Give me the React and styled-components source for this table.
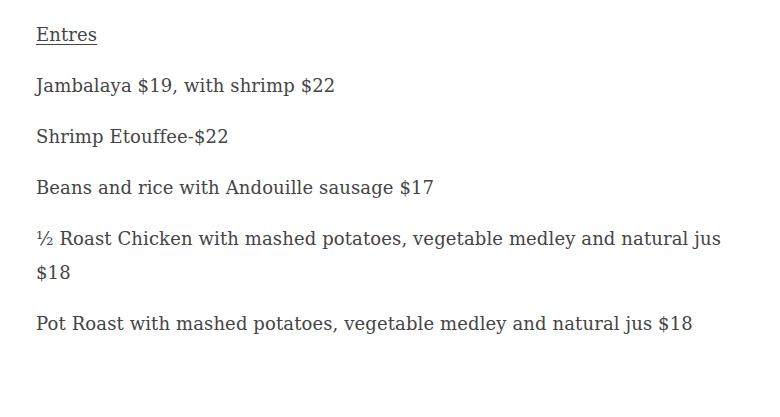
import React from "react";
import styled, { createGlobalStyle } from "styled-components";

const Global = createGlobalStyle`
  html, body { margin: 0; padding: 0; background: #fff; }
`;

const Menu = styled.section`
  box-sizing: border-box;
  width: 780px;
  padding: 18px 44px 0 36px;
  font-family: "DejaVu Serif", "Liberation Serif", serif;
  font-size: 18px;
  letter-spacing: 0.12px;
  line-height: 34px;
  color: #444;
`;

const Item = styled.p`
  margin: 0 0 17px;
  text-decoration: ${(p) => (p.$heading ? "underline" : "none")};
  text-underline-offset: 3px;
  text-decoration-thickness: 1px;
`;

const items = [
  "Jambalaya $19, with shrimp $22",
  "Shrimp Etouffee-$22",
  "Beans and rice with Andouille sausage $17",
  "½ Roast Chicken with mashed potatoes, vegetable medley and natural jus $18",
  "Pot Roast with mashed potatoes, vegetable medley and natural jus $18",
];

export default function App() {
  return (
    <>
      <Global />
      <Menu>
        <Item $heading>Entres</Item>
        {items.map((t) => (
          <Item key={t}>{t}</Item>
        ))}
      </Menu>
    </>
  );
}
